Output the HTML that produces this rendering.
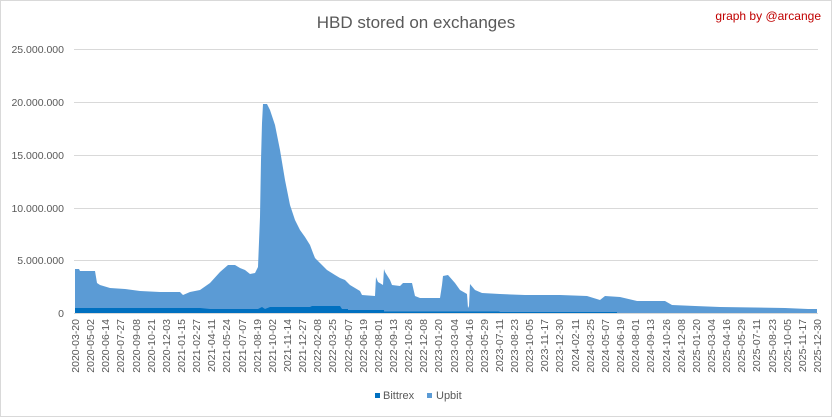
<!DOCTYPE html>
<html><head><meta charset="utf-8"><style>
html,body{margin:0;padding:0;background:#fff;}
svg{display:block;font-family:"Liberation Sans",sans-serif;}
</style></head><body>
<svg width="832" height="417" viewBox="0 0 832 417" xmlns="http://www.w3.org/2000/svg">
<rect x="0.5" y="0.5" width="831" height="416" fill="#fff" stroke="#d9d9d9"/>
<text x="416" y="28" text-anchor="middle" font-size="17" fill="#595959">HBD stored on exchanges</text>
<text x="821" y="20" text-anchor="end" font-size="12" fill="#c00000">graph by @arcange</text>
<g stroke="#d9d9d9" stroke-width="1">
<line x1="74" y1="49.5" x2="818" y2="49.5"/>
<line x1="74" y1="102.5" x2="818" y2="102.5"/>
<line x1="74" y1="155.5" x2="818" y2="155.5"/>
<line x1="74" y1="208.5" x2="818" y2="208.5"/>
<line x1="74" y1="260.5" x2="818" y2="260.5"/>
<line x1="74" y1="313.5" x2="818" y2="313.5"/>
</g>
<g font-size="10.5" fill="#595959" text-anchor="end">
<text x="64" y="53">25.000.000</text>
<text x="64" y="106">20.000.000</text>
<text x="64" y="159">15.000.000</text>
<text x="64" y="212">10.000.000</text>
<text x="64" y="264">5.000.000</text>
<text x="64" y="317">0</text>
</g>
<polygon fill="#5b9bd5" points="75,313 75,269 79,269 80,271 95,271 97,283 100,285 110,288 125,289 140,291 160,292 180,292 183,295 190,292 200,290 210,283 220,272 228,265 235,265 240,268 245,270 250,274 255,273 258,267 260,217 261,160 262,123 263,104 267,104 270,110 275,125 280,150 285,180 290,205 295,220 300,230 305,237 310,245 313,253 315,258 320,263 327,270 335,275 340,278 345,280 350,285 355,288 360,291 362,295 375,296 376,277 378,282 383,285 384,269 385,272 390,280 392,285 400,286 403,283 412,283 415,296 420,298 440,298 442,285 443,276 448,275 455,283 460,290 467,294 468,308 469,306 470,284 475,290 482,293 500,294 525,295 560,295 587,296 600,300 605,296 620,297 637,301 665,301 672,305 695,306 720,307 785,308 808,309 817,309 817,313"/>
<polygon fill="#0070c0" points="75,313 75,308 200,308 210,309 258,309 262,307 265,309 270,307 310,307 312,306 340,306 342,309 348,309 348,310 384,310 384,311.5 499,311.5 500,312 617,312 617,313"/>
<g font-size="10.5" fill="#595959" text-anchor="end">
<text transform="translate(79,319) rotate(-90)">2020-03-20</text>
<text transform="translate(94,319) rotate(-90)">2020-05-02</text>
<text transform="translate(109,319) rotate(-90)">2020-06-14</text>
<text transform="translate(124,319) rotate(-90)">2020-07-27</text>
<text transform="translate(140,319) rotate(-90)">2020-09-08</text>
<text transform="translate(155,319) rotate(-90)">2020-10-21</text>
<text transform="translate(170,319) rotate(-90)">2020-12-03</text>
<text transform="translate(185,319) rotate(-90)">2021-01-15</text>
<text transform="translate(200,319) rotate(-90)">2021-02-27</text>
<text transform="translate(215,319) rotate(-90)">2021-04-11</text>
<text transform="translate(230,319) rotate(-90)">2021-05-24</text>
<text transform="translate(246,319) rotate(-90)">2021-07-07</text>
<text transform="translate(261,319) rotate(-90)">2021-08-19</text>
<text transform="translate(276,319) rotate(-90)">2021-10-02</text>
<text transform="translate(291,319) rotate(-90)">2021-11-14</text>
<text transform="translate(306,319) rotate(-90)">2021-12-27</text>
<text transform="translate(321,319) rotate(-90)">2022-02-08</text>
<text transform="translate(336,319) rotate(-90)">2022-03-25</text>
<text transform="translate(352,319) rotate(-90)">2022-05-07</text>
<text transform="translate(367,319) rotate(-90)">2022-06-19</text>
<text transform="translate(382,319) rotate(-90)">2022-08-01</text>
<text transform="translate(397,319) rotate(-90)">2022-09-13</text>
<text transform="translate(412,319) rotate(-90)">2022-10-26</text>
<text transform="translate(427,319) rotate(-90)">2022-12-08</text>
<text transform="translate(442,319) rotate(-90)">2023-01-20</text>
<text transform="translate(458,319) rotate(-90)">2023-03-04</text>
<text transform="translate(473,319) rotate(-90)">2023-04-16</text>
<text transform="translate(488,319) rotate(-90)">2023-05-29</text>
<text transform="translate(503,319) rotate(-90)">2023-07-11</text>
<text transform="translate(518,319) rotate(-90)">2023-08-23</text>
<text transform="translate(533,319) rotate(-90)">2023-10-05</text>
<text transform="translate(548,319) rotate(-90)">2023-11-17</text>
<text transform="translate(563,319) rotate(-90)">2023-12-30</text>
<text transform="translate(579,319) rotate(-90)">2024-02-11</text>
<text transform="translate(594,319) rotate(-90)">2024-03-25</text>
<text transform="translate(609,319) rotate(-90)">2024-05-07</text>
<text transform="translate(624,319) rotate(-90)">2024-06-19</text>
<text transform="translate(639,319) rotate(-90)">2024-08-01</text>
<text transform="translate(654,319) rotate(-90)">2024-09-13</text>
<text transform="translate(670,319) rotate(-90)">2024-10-26</text>
<text transform="translate(685,319) rotate(-90)">2024-12-08</text>
<text transform="translate(700,319) rotate(-90)">2025-01-20</text>
<text transform="translate(715,319) rotate(-90)">2025-03-04</text>
<text transform="translate(730,319) rotate(-90)">2025-04-16</text>
<text transform="translate(745,319) rotate(-90)">2025-05-29</text>
<text transform="translate(760,319) rotate(-90)">2025-07-11</text>
<text transform="translate(776,319) rotate(-90)">2025-08-23</text>
<text transform="translate(791,319) rotate(-90)">2025-10-05</text>
<text transform="translate(806,319) rotate(-90)">2025-11-17</text>
<text transform="translate(821,319) rotate(-90)">2025-12-30</text>
</g>
<rect x="375" y="393" width="5" height="5" fill="#0070c0"/>
<text x="383" y="399" font-size="11" fill="#595959">Bittrex</text>
<rect x="427" y="393" width="5" height="5" fill="#5b9bd5"/>
<text x="436" y="399" font-size="11" fill="#595959">Upbit</text>
</svg>
</body></html>
